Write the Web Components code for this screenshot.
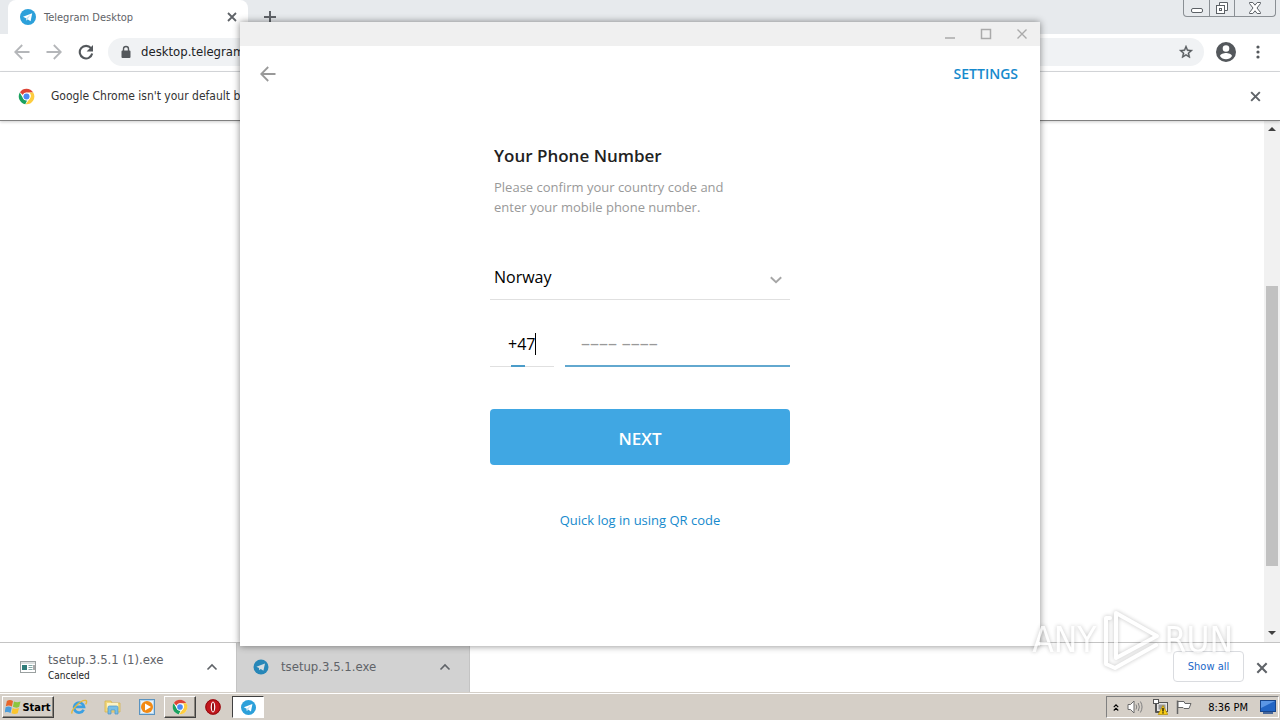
<!DOCTYPE html>
<html lang="en">
<head>
<meta charset="utf-8">
<title>Telegram Desktop</title>
<style>
html, body { margin: 0; height: 100%; }
body { background: #fff; overflow: hidden; }
</style>
</head>
<body>
<desktop-screen></desktop-screen>

<script>
const RESET = `
  * { box-sizing: border-box; }
  button, input, select { font: inherit; color: inherit; margin: 0; padding: 0; border: 0; background: none; outline: none; border-radius: 0; }
  button { display: flex; align-items: center; justify-content: center; }
  a { text-decoration: none; }
  svg { display: block; }
`;

const ICONS = {
  telegram: ['0 0 16 16', `<circle cx="8" cy="8" r="8" fill="#2ca0da"/><path d="M3 7.8 12.2 4.2 10.6 12.2 7.6 10.2 6.2 11.6 6 9.2Z" fill="#fff"/><path d="M6 9.2 10.6 5.8 7.6 10.2 6.2 11.6Z" fill="#c3dff0"/>`],
  telegramDim: ['0 0 16 16', `<circle cx="8" cy="8" r="7.5" fill="#2787b8"/><path d="M3.4 7.8 12 4.6 10.4 11.8 7.8 10 6.2 11.2 6 9Z" fill="#d5dde1"/>`],
  chrome: ['0 0 48 48', `<circle cx="24" cy="24" r="22" fill="#fff"/><path d="M24 2a22 22 0 0 1 19.05 11H24a11 11 0 0 0-10.2 6.9L5.6 11.8A22 22 0 0 1 24 2Z" fill="#dd4436"/><path d="M5 13 14.5 29.5A11 11 0 0 0 26 34.8L20.5 45.7A22 22 0 0 1 5 13Z" fill="#1aa15f"/><path d="M43.05 13A22 22 0 0 1 21.5 45.9L33.5 29.5A11 11 0 0 0 31.5 13Z" fill="#fdcd40"/><circle cx="24" cy="24" r="10.5" fill="#fff"/><circle cx="24" cy="24" r="8.5" fill="#4a8af4"/>`],
  close: ['0 0 12 12', `<path d="M2 2 10 10M10 2 2 10" stroke="currentColor" stroke-width="1.8" fill="none"/>`],
  plus: ['0 0 12 12', `<path d="M6 0V12M0 6H12" stroke="currentColor" stroke-width="2" fill="none"/>`],
  back: ['0 0 16 16', `<path d="M15.5 8H2M8.2 1 1.2 8 8.2 15" stroke="currentColor" stroke-width="1.8" fill="none"/>`],
  forward: ['0 0 16 16', `<path d="M.5 8H14M7.8 1 14.8 8 7.8 15" stroke="currentColor" stroke-width="1.8" fill="none"/>`],
  reload: ['0 0 16 16', `<path d="M13 4.2A6.3 6.3 0 1 0 14.2 9.6" stroke="currentColor" stroke-width="2.1" fill="none"/><path d="M15 1V7.4H8.6Z" fill="currentColor"/>`],
  lock: ['0 0 12 16', `<path d="M2.500 6.500h7a1 1 0 0 1 1 1v5.500a1 1 0 0 1-1 1h-7a1 1 0 0 1-1-1V7.500a1 1 0 0 1 1-1Z" fill="currentColor"/><path d="M3.500 7V5a2.500 2.500 0 0 1 5 0V7" stroke="currentColor" stroke-width="1.400" fill="none"/>`],
  star: ['0 0 24 24', `<path d="M22 9.240l-7.190-.620L12 2 9.190 8.630 2 9.240l5.460 4.730L5.820 21 12 17.270 18.180 21l-1.630-7.030L22 9.240zM12 15.400l-3.760 2.270 1-4.280-3.320-2.880 4.380-.380L12 6.100l1.710 4.040 4.380.380-3.320 2.880 1 4.280L12 15.400z" fill="currentColor" stroke="currentColor" stroke-width=".6"/>`],
  person: ['2 2 20 20', `<path d="M12 2a10 10 0 1 0 0 20 10 10 0 0 0 0-20Zm0 3.200a3.300 3.300 0 1 1 0 6.600 3.300 3.300 0 0 1 0-6.600Zm0 14.100a7.200 7.200 0 0 1-6-3.200c.03-2 4-3.100 6-3.100s5.970 1.100 6 3.100a7.200 7.200 0 0 1-6 3.200Z" fill="currentColor"/>`],
  dots: ['0 0 4 16', `<circle cx="2" cy="3" r="1.600" fill="currentColor"/><circle cx="2" cy="8" r="1.600" fill="currentColor"/><circle cx="2" cy="13" r="1.600" fill="currentColor"/>`],
  chevUp: ['0 0 12 8', `<path d="M1.500 6.500 6 2 10.500 6.500" stroke="currentColor" stroke-width="1.600" fill="none"/>`],
  chevDown: ['0 0 12 8', `<path d="M.8 1.200 6 6.200 11.200 1.200" stroke="currentColor" stroke-width="1.900" fill="none"/>`],
  winMin: ['0 0 12 12', `<rect x=".5" y="6.500" width="11" height="4" rx="1.500" fill="#fff" stroke="#5c6166"/>`],
  winRestore: ['0 0 12 12', `<path d="M3.500 3V.5h8v8H9" fill="#fff" stroke="#5c6166"/><rect x=".5" y="3.500" width="8" height="8" fill="#fff" stroke="#5c6166"/><rect x="3.500" y="6.500" width="2" height="2" fill="none" stroke="#5c6166"/>`],
  winClose: ['0 0 12 12', `<path d="M.5 .5H3.800L6 3.200 8.200.5H11.500V1.500L8 6 11.500 10.500V11.500H8.200L6 8.800 3.800 11.500H.5V10.500L4 6 .5 1.500Z" fill="#fff" stroke="#5c6166"/>`],
  tgMin: ['0 0 12 12', `<path d="M1 10H11" stroke="currentColor" stroke-width="1.500"/>`],
  tgMax: ['0 0 12 12', `<rect x="1.500" y="1.500" width="9" height="9" stroke="currentColor" stroke-width="1.500" fill="none"/>`],
  tgClose: ['0 0 12 12', `<path d="M1.500 1.500 10.500 10.500M10.500 1.500 1.500 10.500" stroke="currentColor" stroke-width="1.400"/>`],
  exe: ['0 0 16 12', `<rect x=".5" y=".5" width="15" height="11" fill="#fff" stroke="#9aa0a0"/><path d="M1 2H15" stroke="#b9c0c0"/><rect x="2" y="4" width="5" height="5" fill="#2f7c79"/><path d="M8.500 4.500h4M8.500 6.500h4M8.500 8.500h4" stroke="#7fa7a5"/><path d="M14 4v5" stroke="#555"/>`],
  flag: ['0 0 16 16', `<path d="M8 2C5.500.5 3.500 1 1.900 2L.8 7.300C2.800 6.300 4.800 6.300 6.900 7.500Z" fill="#e8662b"/><path d="M9 2.500C11 3.500 13 3.600 15.500 2.500L14.200 7.800C12 9 10 8.800 7.900 7.800Z" fill="#8cc63e"/><path d="M.6 8.300C2.600 7.300 4.600 7.400 6.700 8.500L5.500 14C3.600 12.800 1.600 12.700-.4 13.600Z" fill="#4c9ddb"/><path d="M7.700 8.900C9.700 10 11.700 10 14 9L12.700 14.200C10.700 15.300 8.500 15.200 6.500 14.200Z" fill="#fbc52c"/>`],
  ie: ['0 0 18 18', `<path d="M13.600 11.700A5 5 0 1 1 14 8.900H5" stroke="#3ba0e2" stroke-width="2.700" fill="none"/><path d="M2.300 15.500C-.6 13.600 10.500 1.500 15.800 2.500 17.300 3 16.500 5 15.600 6.400" stroke="#e6b93a" stroke-width="1.400" fill="none"/>`],
  folder: ['0 0 18 18', `<path d="M1 3h6l1 2h8v9H1Z" fill="#f1d77c" stroke="#d5b450" stroke-width=".8"/><path d="M3 5h11v5H3Z" fill="#fdf3c4"/><path d="M4 16V9.500Q4 8 5.500 8h7Q14 8 14 9.500V16h-3v-4H7v4Z" fill="#78bfe6" stroke="#4c93c4" stroke-width=".7"/>`],
  media: ['0 0 16 16', `<rect x=".5" y=".5" width="15" height="15" fill="#b8d8ef" stroke="#5a93c0"/><rect x="2" y="2" width="12" height="12" fill="#e9f3fa"/><circle cx="8" cy="8" r="6" fill="#f28a14"/><path d="M6 4.500 12 8 6 11.500Z" fill="#fff"/>`],
  opera: ['0 0 16 16', `<circle cx="8" cy="8" r="7.700" fill="#c3161c"/><circle cx="8" cy="8" r="7.200" fill="none" stroke="#8e0d11"/><ellipse cx="8" cy="8" rx="2.300" ry="5.400" fill="#fff"/><ellipse cx="8" cy="8" rx="1.100" ry="4.600" fill="#8e0d11"/>`],
  expand: ['0 0 8 10', `<path d="M1 4.500 4 1.500 7 4.500M1 9 4 6 7 9" stroke="#000" stroke-width="1.500" fill="none"/>`],
  sound: ['0 0 16 14', `<path d="M.5 4.500H3L6.500 1V13L3 9.500H.5Z" fill="#fff" stroke="#6b6b6b"/><path d="M8.500 4.500Q10 7 8.500 9.500M10.700 3Q13 7 10.700 11M12.900 1.500Q16.200 7 12.900 12.500" stroke="#808080" fill="none"/>`],
  network: ['0 0 16 16', `<rect x="4.500" y="3.500" width="11" height="9" fill="#e6e6e6" stroke="#555"/><rect x="6.500" y="5.500" width="7" height="5" fill="#9a9a9a"/><path d="M3.500 4.500V13.500H7" fill="none" stroke="#555"/><rect x="1.500" y=".5" width="5" height="4" fill="#fff" stroke="#555"/><path d="M11 6.500 15.800 15.500H6.200Z" fill="#f8cd16" stroke="#b08900" stroke-width=".7"/><path d="M11 9v3.500M11 13.200v1.300" stroke="#000" stroke-width="1.200"/>`],
  action: ['0 0 16 14', `<path d="M1.500.5V14" stroke="#666" stroke-width="1.500"/><path d="M2 1.500H8L9 3.500H15L13 8.500H8L7 7.500H2Z" fill="#fff" stroke="#666"/>`],
  desktop: ['0 0 16 14', `<rect x=".5" y=".5" width="15" height="11" fill="#2265c4" stroke="#17458b"/><path d="M1 1H15L1 8Z" fill="#5b96e4"/><path d="M3 13H13" stroke="#17458b" stroke-width="1.500"/>`],
  arrowUp: ['0 0 8 4', `<path d="M4 0 8 4H0Z" fill="#404040"/>`],
  arrowDown: ['0 0 8 4', `<path d="M4 4 8 0H0Z" fill="#404040"/>`],
  play: ['0 0 60 64', `<g fill="none" stroke="#fff" stroke-width="4" stroke-linejoin="round" stroke-linecap="round"><path d="M15 50V5L56 28Z"/><path d="M9 10H5V56L14 60 55 37"/></g>`]
};

function define(name, css, html) {
  customElements.define(name, class extends HTMLElement {
    connectedCallback() {
      if (this.shadowRoot) return;
      const root = this.attachShadow({ mode: 'open' });
      root.innerHTML = `<style>${RESET}${css}</style>` + (typeof html === 'function' ? html(this) : html);
    }
  });
}

/* A glyph from the set above: <ui-icon name="…" w="…" h="…"> */
define('ui-icon', ':host { display: block; flex: none; line-height: 0; }', el => {
  const [box, body] = ICONS[el.getAttribute('name')];
  const w = el.getAttribute('w'), h = el.getAttribute('h') || w;
  return `<svg width="${w}" height="${h}" viewBox="${box}" aria-hidden="true">${body}</svg>`;
});

define('window-controls', `
  :host { display: flex; height: 17px; border: 1px solid #8a8f94; border-top: 0; border-radius: 0 0 4px 4px; }
  button { width: 25px; }
  button + button { border-left: 1px solid #8a8f94; }
  button:last-child { width: 41px; }
`, `
  <button aria-label="Minimize"><ui-icon name="winMin" w="12"></ui-icon></button>
  <button aria-label="Restore"><ui-icon name="winRestore" w="12"></ui-icon></button>
  <button aria-label="Close"><ui-icon name="winClose" w="12"></ui-icon></button>
`);

define('tab-strip', `
  :host { display: flex; align-items: flex-start; height: 34px; padding: 0 4px 0 8px; background: #e7eaed; color: #5f6368; font-size: 11px; }
  .tab { display: flex; align-items: center; width: 240px; height: 34px; padding: 0 10px 0 12px; border-radius: 8px 8px 0 0; background: #fff; }
  .tab span { flex: 1; padding-left: 8px; }
  .new { width: 44px; height: 34px; }
  window-controls { margin-left: auto; }
`, `
  <div class="tab"><ui-icon name="telegram" w="16"></ui-icon><span>Telegram Desktop</span>
    <button aria-label="Close tab"><ui-icon name="close" w="12"></ui-icon></button></div>
  <button class="new" aria-label="New tab"><ui-icon name="plus" w="12"></ui-icon></button>
  <window-controls></window-controls>
`);

define('address-bar', `
  :host { display: flex; align-items: center; gap: 16px; height: 38px; padding: 0 20px 2px 14px; border-bottom: 1px solid #d8dadd; background: #fff; color: #54585c; }
  .off { color: #b4b6b9; }
  .url { display: flex; flex: 1; align-items: center; height: 28px; margin: 0 -4px 0 -2px; padding: 0 10px 0 12px; border-radius: 14px; background: #f0f2f4; }
  input { flex: 1; min-width: 0; padding: 0 9px; color: #202124; font-size: 13px; }
  .menu { width: 4px; margin-left: 4px; }
`, `
  <button class="off" aria-label="Back"><ui-icon name="back" w="16"></ui-icon></button>
  <button class="off" aria-label="Forward"><ui-icon name="forward" w="16"></ui-icon></button>
  <button aria-label="Reload"><ui-icon name="reload" w="16"></ui-icon></button>
  <div class="url"><ui-icon name="lock" w="12" h="16"></ui-icon>
    <input aria-label="Address" value="desktop.telegram.org">
    <button aria-label="Bookmark this tab"><ui-icon name="star" w="16"></ui-icon></button></div>
  <button aria-label="Profile"><ui-icon name="person" w="20"></ui-icon></button>
  <button class="menu" aria-label="Menu"><ui-icon name="dots" w="4" h="16"></ui-icon></button>
`);

define('info-bar', `
  :host { display: flex; position: relative; align-items: center; height: 49px; padding: 0 18px; border-bottom: 1px solid #808080; background: #fff; box-shadow: 0 1px 3px #0003; color: #333; font-size: 12px; }
  .text { flex: 1; padding: 0 16px; }
  button { color: #5f6368; }
`, `
  <ui-icon name="chrome" w="17"></ui-icon><div class="text"><slot></slot></div>
  <button aria-label="Dismiss"><ui-icon name="close" w="13"></ui-icon></button>
`);

define('page-view', `
  :host { display: flex; flex: 1; justify-content: flex-end; min-height: 0; background: #fff; }
  .track { display: flex; flex-direction: column; align-items: center; justify-content: space-between; width: 16px; background: #f1f1f1; padding: 6px 0 7px; }
  .rail { flex: 1; width: 12px; padding: 155px 0 65px; }
  .thumb { height: 100%; background: #c1c1c1; }
`, `
  <div class="track"><ui-icon name="arrowUp" w="8" h="4"></ui-icon>
    <div class="rail"><div class="thumb"></div></div>
    <ui-icon name="arrowDown" w="8" h="4"></ui-icon></div>
`);

define('download-item', `
  :host { display: flex; align-items: center; width: 237px; height: 49px; padding: 0 18px 2px 20px; border-right: 1px solid #c4c4c4; color: #5f6368; font-size: 13px; }
  :host([active]) { width: 233px; padding-left: 16px; background: #d2d2d2; }
  .text { flex: 1; padding-left: 12px; line-height: 18px; }
`, el => `
  <ui-icon name="${el.getAttribute('icon')}" w="16"></ui-icon>
  <div class="text"><slot></slot></div>
  <button aria-label="Options"><ui-icon name="chevUp" w="12" h="8"></ui-icon></button>
`);

define('download-shelf', `
  :host { display: flex; height: 50px; border-top: 1px solid #c4c4c4; background: #fff; }
  small { display: block; font-size: 10px; line-height: 14px; color: #222; }
  .all { width: 71px; height: 31px; margin: 8px 11px 0 auto; border: 1px solid #dadce0; border-radius: 4px; color: #1a67c8; font-size: 11px; }
  .close { width: 14px; margin-right: 11px; color: #5f6368; }
`, `
  <download-item icon="exe">tsetup.3.5.1 (1).exe<small>Canceled</small></download-item>
  <download-item icon="telegramDim" active>tsetup.3.5.1.exe</download-item>
  <button class="all">Show all</button>
  <button class="close" aria-label="Close downloads"><ui-icon name="close" w="14"></ui-icon></button>
`);

define('task-bar', `
  :host { display: flex; align-items: center; height: 28px; padding: 1px 1px 0 2px; border-top: 1px solid #d4cfc8; background: #d5cfc7; box-shadow: inset 0 1px #fff; color: #000; font-size: 11px; }
  .raised { border: 1px solid; border-color: #fff #404040 #404040 #fff; box-shadow: inset -1px -1px #8a857d; }
  .start { width: 52px; height: 22px; gap: 1px; font-weight: bold; }
  .apps { display: flex; align-items: center; margin-left: 8px; }
  .apps button { width: 34px; height: 22px; }
  .apps .raised { width: 32px; }
  .apps .current { width: 32px; margin-left: 2px; border: 1px solid; border-color: #404040 #fff #fff #404040; background: #fff; }
  .tray { display: flex; align-items: center; gap: 8px; height: 22px; margin-left: auto; padding: 0 2px 0 6px; border: 1px solid; border-color: #808080 #fff #fff #808080; }
  time { padding: 0 4px 0 8px; }
`, `
  <button class="start raised"><ui-icon name="flag" w="16"></ui-icon>Start</button>
  <nav class="apps" aria-label="Applications">
    <button aria-label="Internet Explorer"><ui-icon name="ie" w="18"></ui-icon></button>
    <button aria-label="Explorer"><ui-icon name="folder" w="18"></ui-icon></button>
    <button aria-label="Media Player"><ui-icon name="media" w="16"></ui-icon></button>
    <button class="raised" aria-label="Chrome"><ui-icon name="chrome" w="16"></ui-icon></button>
    <button aria-label="Opera"><ui-icon name="opera" w="16"></ui-icon></button>
    <button class="current" aria-label="Telegram"><ui-icon name="telegram" w="15"></ui-icon></button>
  </nav>
  <div class="tray">
    <ui-icon name="expand" w="6" h="9"></ui-icon>
    <ui-icon name="sound" w="17" h="14"></ui-icon>
    <ui-icon name="network" w="16"></ui-icon>
    <ui-icon name="action" w="16" h="14"></ui-icon>
    <time>8:36 PM</time>
    <ui-icon name="desktop" w="16" h="14"></ui-icon>
  </div>
`);

define('phone-form', `
  :host { display: block; width: 300px; margin: 0 auto; color: #000; font-size: 16px; }
  h1 { margin: 0 4px; color: #222; font-size: 17px; font-weight: 600; line-height: 24px; }
  p { width: 250px; margin: 9px 4px 39px; color: #999; font-size: 13px; line-height: 20px; }
  .country { position: relative; }
  select { display: block; width: 100%; height: 44px; padding: 0 4px 2px; border-bottom: 1px solid #e0e0e0; appearance: none; }
  .country ui-icon { position: absolute; right: 8px; top: 20px; color: #a6a6a6; pointer-events: none; }
  .row { display: flex; gap: 11px; margin-top: 23px; }
  .code { position: relative; width: 64px; }
  input { display: block; width: 100%; height: 44px; padding: 0 0 2px 18px; border-bottom: 1px solid #e0e0e0; }
  .caret { position: absolute; left: 45px; top: 10px; width: 1px; height: 22px; background: #000; }
  .sweep { position: absolute; left: 21px; bottom: 0; width: 14px; height: 2px; background: #4a9cc9; }
  .number { flex: 1; }
  .number input { padding-left: 16px; border-bottom: 2px solid #62a8cf; font-size: 18px; }
  ::placeholder { color: #999; opacity: 1; }
  .next { width: 100%; height: 56px; margin-top: 42px; padding-top: 2px; border-radius: 4px; background: #40a7e3; color: #fff; font-size: 17px; font-weight: 600; }
  .qr { display: block; margin-top: 45px; color: #168acd; font-size: 13px; line-height: 20px; text-align: center; }
`, `
  <h1>Your Phone Number</h1>
  <p>Please confirm your country code and enter your mobile phone number.</p>
  <div class="country"><select aria-label="Country"><option>Norway</option></select><ui-icon name="chevDown" w="12" h="8"></ui-icon></div>
  <div class="row">
    <div class="code"><input aria-label="Country code" value="+47"><span class="caret"></span><span class="sweep"></span></div>
    <div class="number"><input type="tel" aria-label="Phone number" placeholder="–––– ––––"></div>
  </div>
  <button class="next">NEXT</button>
  <a class="qr" href="#qr">Quick log in using QR code</a>
`);

define('telegram-window', `
  :host { display: block; background: #fff; box-shadow: 0 0 7px #0007; font-family: "Open Sans", sans-serif; }
  .title { display: flex; justify-content: flex-end; height: 24px; background: #f0f0f0; color: #aaa; }
  .title button { width: 36px; }
  .head { display: flex; align-items: center; justify-content: space-between; height: 56px; padding: 0 22px 0 20px; color: #999; }
  .head a { padding-bottom: 2px; color: #168acd; font-size: 14px; font-weight: 600; }
  phone-form { padding-top: 42px; }
`, `
  <div class="title">
    <button aria-label="Minimize"><ui-icon name="tgMin" w="12"></ui-icon></button>
    <button aria-label="Maximize"><ui-icon name="tgMax" w="12"></ui-icon></button>
    <button aria-label="Close"><ui-icon name="tgClose" w="12"></ui-icon></button>
  </div>
  <div class="head"><button aria-label="Back"><ui-icon name="back" w="16"></ui-icon></button><a href="#settings">SETTINGS</a></div>
  <phone-form></phone-form>
`);

define('run-watermark', `
  :host { display: flex; align-items: center; gap: 4px; pointer-events: none; opacity: .7; filter: drop-shadow(0 0 2px #0005);
    color: #fff; font: 35px/44px "DejaVu Sans Condensed", sans-serif; }
`, `<span>ANY</span><ui-icon name="play" w="60" h="64"></ui-icon><span>RUN</span>`);

define('desktop-screen', `
  :host { display: flex; position: relative; flex-direction: column; height: 100vh; overflow: hidden; font-family: Tahoma, "DejaVu Sans Condensed", "DejaVu Sans", sans-serif; }
  telegram-window { position: absolute; top: 22px; bottom: 74px; left: 50%; width: 800px; max-width: 100%; transform: translateX(-50%); }
  run-watermark { position: absolute; right: 47px; bottom: 48px; }
`, `
  <tab-strip></tab-strip>
  <address-bar></address-bar>
  <info-bar>Google Chrome isn't your default browser</info-bar>
  <page-view></page-view>
  <download-shelf></download-shelf>
  <task-bar></task-bar>
  <telegram-window></telegram-window>
  <run-watermark></run-watermark>
`);
</script>
</body>
</html>
